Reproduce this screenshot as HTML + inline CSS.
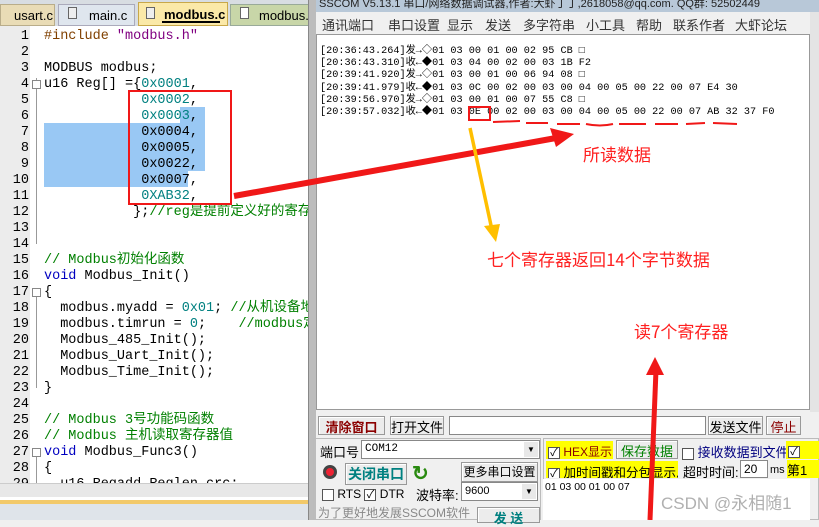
<!DOCTYPE html>
<html><head><meta charset="utf-8"><style>
*{margin:0;padding:0;box-sizing:border-box}
body{width:819px;height:520px;overflow:hidden;position:relative;background:#f0f0f0;font-family:"Liberation Sans","Noto Sans CJK SC",sans-serif}
.a{position:absolute;white-space:nowrap}
.code{font-family:"Liberation Mono","Noto Sans CJK SC",monospace;font-size:13.5px;line-height:16px}
.ln{position:absolute;left:0;width:29px;text-align:right;font-family:"Liberation Mono",monospace;font-size:13.5px;color:#000}
.c{color:#008000}.n{color:#008080}.k{color:#0000c0}.p{color:#804000}
.rx{font-family:"Liberation Mono","Noto Sans CJK SC",monospace;font-size:10.2px;line-height:12.2px;color:#000}
.btn{position:absolute;background:#ececec;border:1px solid #999;box-shadow:inset 1px 1px #fff;font-size:13px;text-align:center;font-family:"Liberation Sans","Noto Sans CJK SC",sans-serif;white-space:nowrap}
.cb{display:inline-block;width:12px;height:12px;border:1px solid #555;background:#fff;vertical-align:middle;font-size:11px;line-height:10px;text-align:center}
.red{color:#ff2020;font-family:"Noto Sans CJK SC",sans-serif;font-size:17px}
</style></head><body>
<div class="a" style="left:0;top:0;width:308px;height:26px;background:#d8dde2"></div>
<div class="a" style="left:0;top:4px;width:55px;height:22px;background:#e9dcb6;border:1px solid #b9ad8a;font-size:13px;padding:3px 0 0 13px">usart.c</div>
<div class="a" style="left:58px;top:4px;width:77px;height:22px;background:#dfe6ee;border:1px solid #aab;font-size:13px;padding:3px 0 0 30px">main.c</div>
<div class="a" style="left:68px;top:7px;width:9px;height:12px;border:1px solid #666;background:#eee"></div>
<div class="a" style="left:138px;top:2px;width:90px;height:24px;background:#fbe9a8;border:1px solid #c8a84a;font-size:13px;font-weight:bold;padding:4px 0 0 25px">modbus.c</div>
<div class="a" style="left:146px;top:7px;width:9px;height:12px;border:1px solid #666;background:#eee"></div>
<div class="a" style="left:162px;top:21px;width:58px;height:2px;background:#000"></div>
<div class="a" style="left:230px;top:4px;width:80px;height:22px;background:#c8d6a8;border:1px solid #9a9;font-size:13px;padding:3px 0 0 28px">modbus.h</div>
<div class="a" style="left:240px;top:7px;width:9px;height:12px;border:1px solid #666;background:#fff"></div>
<div class="a" style="left:0;top:26px;width:308px;height:457px;background:#fff"></div>
<div class="a" style="left:0;top:26px;width:30px;height:457px;background:#ececec"></div>
<div class="a" style="left:180px;top:107px;width:25px;height:16px;background:#99c8f4"></div>
<div class="a" style="left:44px;top:123px;width:161px;height:48px;background:#99c8f4"></div>
<div class="a" style="left:44px;top:171px;width:144px;height:16px;background:#99c8f4"></div>
<div class="a" style="left:36px;top:78px;width:1px;height:166px;background:#999"></div>
<div class="a" style="left:32px;top:80px;width:9px;height:9px;border:1px solid #888;background:#fff"></div>
<div class="a" style="left:36px;top:288px;width:1px;height:100px;background:#999"></div>
<div class="a" style="left:32px;top:288px;width:9px;height:9px;border:1px solid #888;background:#fff"></div>
<div class="a" style="left:36px;top:448px;width:1px;height:40px;background:#999"></div>
<div class="a" style="left:32px;top:448px;width:9px;height:9px;border:1px solid #888;background:#fff"></div>
<div class="a code" style="left:0;top:29px;width:308px;height:454px;overflow:hidden">
<div class="ln" style="top:0">1</div><div class="ln" style="top:16px">2</div><div class="ln" style="top:32px">3</div><div class="ln" style="top:48px">4</div><div class="ln" style="top:64px">5</div><div class="ln" style="top:80px">6</div><div class="ln" style="top:96px">7</div><div class="ln" style="top:112px">8</div><div class="ln" style="top:128px">9</div><div class="ln" style="top:144px">10</div><div class="ln" style="top:160px">11</div><div class="ln" style="top:176px">12</div><div class="ln" style="top:192px">13</div><div class="ln" style="top:208px">14</div><div class="ln" style="top:224px">15</div><div class="ln" style="top:240px">16</div><div class="ln" style="top:256px">17</div><div class="ln" style="top:272px">18</div><div class="ln" style="top:288px">19</div><div class="ln" style="top:304px">20</div><div class="ln" style="top:320px">21</div><div class="ln" style="top:336px">22</div><div class="ln" style="top:352px">23</div><div class="ln" style="top:368px">24</div><div class="ln" style="top:384px">25</div><div class="ln" style="top:400px">26</div><div class="ln" style="top:416px">27</div><div class="ln" style="top:432px">28</div><div class="ln" style="top:448px">29</div>
<pre class="code" style="position:absolute;left:44px;top:0;overflow:hidden;width:264px;white-space:pre"><span class="p">#include</span> <span style="color:#800080">"modbus.h"</span>

MODBUS modbus;
u16 Reg[] ={<span class="n">0x0001</span>,
            <span class="n">0x0002</span>,
            <span class="n">0x0003</span>,
            0x0004,
            0x0005,
            0x0022,
            0x0007,
            <span class="n">0XAB32</span>,
           };<span class="c">//reg是提前定义好的寄存器</span>


<span class="c">// Modbus初始化函数</span>
<span class="k">void</span> Modbus_Init()
{
  modbus.myadd = <span class="n">0x01</span>; <span class="c">//从机设备地址</span>
  modbus.timrun = <span class="n">0</span>;    <span class="c">//modbus定时器</span>
  Modbus_485_Init();
  Modbus_Uart_Init();
  Modbus_Time_Init();
}

<span class="c">// Modbus 3号功能码函数</span>
<span class="c">// Modbus 主机读取寄存器值</span>
<span class="k">void</span> Modbus_Func3()
{
  u16 Regadd,Reglen,crc;</pre></div>
<div class="a" style="left:0;top:483px;width:308px;height:14px;background:#e8e8e8;border-top:1px solid #ccc"></div>
<div class="a" style="left:0;top:497px;width:308px;height:3px;background:#fff"></div>
<div class="a" style="left:0;top:500px;width:308px;height:4px;background:#f2c96a"></div>
<div class="a" style="left:0;top:504px;width:308px;height:16px;background:#dfe4ea"></div>
<div class="a" style="left:308px;top:0;width:8px;height:520px;background:#bcbcbc;border-left:1px solid #888"></div>
<div class="a" style="left:316px;top:0;width:503px;height:12px;background:#b8c8d8;font-size:11px;line-height:8px;color:#222;overflow:hidden">&nbsp;SSCOM V5.13.1 串口/网络数据调试器,作者:大虾丁丁,2618058@qq.com. QQ群: 52502449</div>
<div class="a" style="left:316px;top:12px;width:503px;height:22px;background:#f0f0f0;font-size:13px;color:#333">
<span class="a" style="left:6px;top:3px">通讯端口</span><span class="a" style="left:72px;top:3px">串口设置</span><span class="a" style="left:131px;top:3px">显示</span><span class="a" style="left:169px;top:3px">发送</span><span class="a" style="left:207px;top:3px">多字符串</span><span class="a" style="left:270px;top:3px">小工具</span><span class="a" style="left:320px;top:3px">帮助</span><span class="a" style="left:357px;top:3px">联系作者</span><span class="a" style="left:419px;top:3px">大虾论坛</span></div>
<div class="a" style="left:316px;top:34px;width:494px;height:376px;background:#fff;border:1px solid #999"></div>
<div class="a" style="left:810px;top:12px;width:9px;height:400px;background:#e4e4e4"></div>
<div class="a rx" style="left:320px;top:46px">[20:36:43.264]发→◇01 03 00 01 00 02 95 CB □<br>[20:36:43.310]收←◆01 03 04 00 02 00 03 1B F2<br>[20:39:41.920]发→◇01 03 00 01 00 06 94 08 □<br>[20:39:41.979]收←◆01 03 0C 00 02 00 03 00 04 00 05 00 22 00 07 E4 30<br>[20:39:56.970]发→◇01 03 00 01 00 07 55 C8 □<br>[20:39:57.032]收←◆01 03 0E 00 02 00 03 00 04 00 05 00 22 00 07 AB 32 37 F0</div>
<div class="btn" style="left:318px;top:416px;width:67px;height:19px;color:#8b0000;font-weight:bold">清除窗口</div>
<div class="btn" style="left:390px;top:416px;width:54px;height:19px">打开文件</div>
<div class="a" style="left:449px;top:416px;width:257px;height:19px;background:#fff;border:1px solid #888"></div>
<div class="btn" style="left:708px;top:416px;width:55px;height:19px">发送文件</div>
<div class="btn" style="left:766px;top:416px;width:35px;height:19px;color:#8b0000">停止</div>
<div class="a" style="left:313px;top:438px;width:228px;height:82px;border:1px solid #bbb"></div>
<div class="a" style="left:320px;top:442px;font-size:13px">端口号</div>
<div class="a" style="left:361px;top:440px;width:179px;height:19px;background:#fff;border:1px solid #888;font-family:'Liberation Mono',monospace;font-size:11px;padding:2px 3px">COM12</div>
<div class="a" style="left:524px;top:442px;width:14px;height:15px;background:#e8e8e8;font-size:8px;text-align:center;line-height:15px">▼</div>
<div class="a" style="left:323px;top:465px;width:14px;height:14px;border-radius:50%;background:#e23;border:3px solid #444"></div>
<div class="btn" style="left:345px;top:463px;width:62px;height:22px;color:#008080;font-weight:bold;font-size:14px;line-height:20px">关闭串口</div>
<div class="a" style="left:412px;top:461px;font-size:20px;color:#2a8a10;font-weight:bold">↻</div>
<div class="btn" style="left:461px;top:462px;width:77px;height:20px;line-height:18px;font-size:12px">更多串口设置</div>
<div class="a" style="left:322px;top:487px;font-size:12px"><span class="cb"></span> RTS <span class="cb">✓</span> DTR</div>
<div class="a" style="left:416px;top:485px;font-size:13px">波特率:</div>
<div class="a" style="left:461px;top:482px;width:77px;height:19px;background:#fff;border:1px solid #888;font-size:11px;padding:2px 3px">9600</div>
<div class="a" style="left:522px;top:484px;width:14px;height:15px;background:#e8e8e8;font-size:8px;text-align:center;line-height:15px">▼</div>
<div class="a" style="left:318px;top:504px;font-size:12px;color:#888">为了更好地发展SSCOM软件</div>
<div class="btn" style="left:477px;top:507px;width:63px;height:16px;color:#008080;font-weight:bold">发 送</div>
<div class="a" style="left:543px;top:438px;width:276px;height:82px;border:1px solid #bbb"></div>
<div class="a" style="left:546px;top:441px;width:67px;height:18px;background:#ffff00;font-size:12px;padding:2px 2px"><span class="cb">✓</span> <span style="color:#8b0000">HEX显示</span></div>
<div class="btn" style="left:616px;top:440px;width:62px;height:19px;color:#008000">保存数据</div>
<div class="a" style="left:682px;top:442px;font-size:13px;color:#000080"><span class="cb"></span> 接收数据到文件</div>
<div class="a" style="left:786px;top:441px;width:33px;height:18px;background:#ffff00;padding:2px"><span class="cb">✓</span></div>
<div class="a" style="left:546px;top:461px;width:132px;height:17px;background:#ffff00;font-size:12.5px;padding:1px 2px;overflow:hidden"><span class="cb">✓</span> 加时间戳和分包显示,</div>
<div class="a" style="left:683px;top:462px;font-size:13px">超时时间:</div>
<div class="a" style="left:740px;top:460px;width:28px;height:18px;background:#fff;border:1px solid #888;font-size:12px;padding:1px 3px">20</div>
<div class="a" style="left:770px;top:464px;font-size:11px">ms</div>
<div class="a" style="left:787px;top:460px;width:32px;height:18px;background:#ffff00;font-size:13px">第1</div>
<div class="a" style="left:543px;top:479px;width:267px;height:41px;background:#fff"></div>
<div class="a" style="left:545px;top:481px;font-family:'Liberation Sans',sans-serif;font-size:10.5px">01 03 00 01 00 07</div>
<div class="a" style="left:661px;top:489px;font-size:17px;color:#b0b0b0">CSDN @永相随1</div>
<div class="a" style="left:128px;top:90px;width:104px;height:115px;border:2.5px solid #f01818"></div>
<div class="a" style="left:468px;top:106px;width:23px;height:15px;border:2px solid #f01818"></div>
<svg class="a" style="left:0;top:0" width="819" height="520">
<path d="M493 122 L520 121 M526 123 L548 123 M557 124 L580 124 M586 124 Q600 127 613 124 M619 124 L646 124 M655 124 L678 124 M686 124 L705 123 M713 123 L737 124" stroke="#f01818" stroke-width="2" fill="none"/>
<path d="M234 196 L556 138" stroke="#f01818" stroke-width="6"/>
<polygon points="574,134 550,128 556,147" fill="#f01818"/>
<path d="M470 128 L492 230" stroke="#ffbf00" stroke-width="3.5"/>
<polygon points="496,242 484,226 500,224" fill="#ffbf00"/>
<path d="M650 520 L656 370" stroke="#f01818" stroke-width="5"/>
<polygon points="655,357 646,375 664,375" fill="#f01818"/>
</svg>
<div class="a red" style="left:583px;top:141px">所读数据</div>
<div class="a red" style="left:487px;top:246px">七个寄存器返回14个字节数据</div>
<div class="a red" style="left:634px;top:318px">读7个寄存器</div>
</body></html>
